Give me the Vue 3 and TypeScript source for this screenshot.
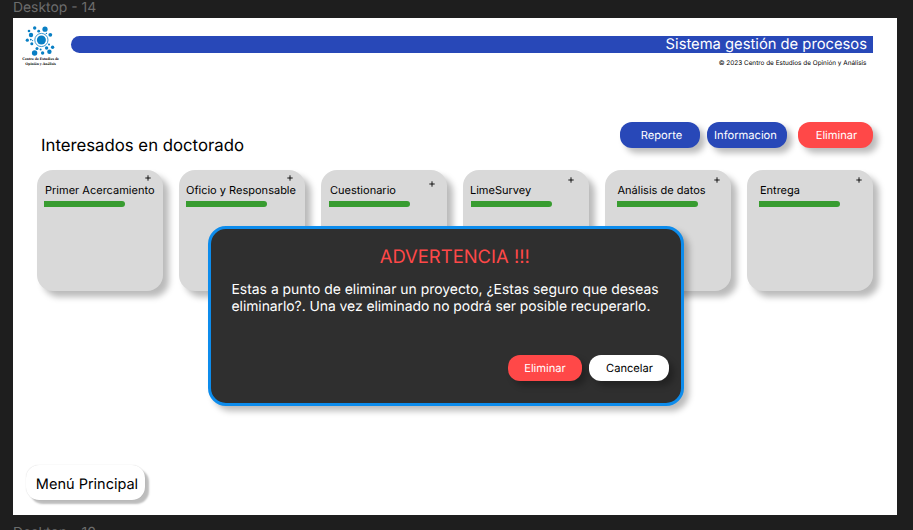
<script setup lang="ts">
interface Stage {
  id: string
  title: string
}

interface Dot {
  x: number
  y: number
  r: number
}

const stages: Stage[] = [
  { id: 'acercamiento', title: 'Primer Acercamiento' },
  { id: 'oficio', title: 'Oficio y Responsable' },
  { id: 'cuestionario', title: 'Cuestionario' },
  { id: 'limesurvey', title: 'LimeSurvey' },
  { id: 'analisis', title: 'Análisis de datos' },
  { id: 'entrega', title: 'Entrega' },
]

const dots: Dot[] = [
  { x: 13.7, y: 3, r: 1.7 },
  { x: 24, y: 4.2, r: 2.6 },
  { x: 8, y: 6, r: 1.3 },
  { x: 17.7, y: 6.2, r: 1.4 },
  { x: 10, y: 10, r: 2.2 },
  { x: 29.3, y: 9.8, r: 1.9 },
  { x: 6.3, y: 15.2, r: 1.6 },
  { x: 9.8, y: 14.6, r: 0.9 },
  { x: 11.6, y: 15.6, r: 0.6 },
  { x: 10.8, y: 18.8, r: 1.5 },
  { x: 28, y: 19.6, r: 1 },
  { x: 31.6, y: 22.2, r: 1.7 },
  { x: 16, y: 23.4, r: 1.5 },
  { x: 25.6, y: 23, r: 1.7 },
  { x: 19.6, y: 24.6, r: 1 },
  { x: 13.6, y: 28, r: 2.7 },
  { x: 21.6, y: 28, r: 1.7 },
  { x: 28.4, y: 26.8, r: 2.2 },
  { x: 25.4, y: 8.4, r: 0.7 },
]
</script>

<template>
  <div class="canvas">
    <div class="frame-label">Desktop - 14</div>
    <main class="frame">
      <header class="header">
        <div class="logo">
          <svg class="logo-mark" viewBox="0 0 36 31">
            <circle v-for="(d, i) in dots" :key="i" :cx="d.x" :cy="d.y" :r="d.r" />
            <circle cx="20.4" cy="15" r="4.5" />
            <circle class="ring" cx="20.4" cy="15" r="6.6" />
          </svg>
          <div class="logo-text">Centro de Estudios de<br />Opinión y Análisis</div>
        </div>
        <div class="heading">
          <div class="banner">Sistema gestión de procesos</div>
          <div class="copyright">© 2023 Centro de Estudios de Opinión y Análisis</div>
        </div>
      </header>

      <section class="toolbar">
        <h1 class="title">Interesados en doctorado</h1>
        <button class="btn report">Reporte</button>
        <button class="btn info">Informacion</button>
        <button class="btn remove">Eliminar</button>
      </section>

      <section class="stages">
        <article v-for="s in stages" :key="s.id" class="stage" :class="s.id">
          <svg class="plus" viewBox="0 0 6 6"><path d="M3 .3V5.7M.3 3H5.7" /></svg>
          <div class="stage-title">{{ s.title }}</div>
          <div class="progress"></div>
        </article>
      </section>

      <button class="menu">Menú Principal</button>

      <div class="dialog" role="alertdialog">
        <h2 class="dialog-title">ADVERTENCIA !!!</h2>
        <p class="dialog-text">
          Estas a punto de eliminar un proyecto, ¿Estas seguro que deseas<br />
          <span class="second">eliminarlo?. Una vez eliminado no podrá ser posible recuperarlo.</span>
        </p>
        <div class="dialog-actions">
          <button class="btn confirm">Eliminar</button>
          <button class="btn cancel">Cancelar</button>
        </div>
      </div>
    </main>
    <div class="frame-label next">Desktop - 10</div>
  </div>
</template>

<style>
body {
  background: #1e1e1e;
  overflow: hidden;
}
</style>

<style scoped>
.canvas {
  box-sizing: border-box;
  width: 913px;
  height: 530px;
  padding-left: 13px;
  overflow: hidden;
  background: #1e1e1e;
  font-family: Inter, "Liberation Sans", sans-serif;
  text-rendering: geometricPrecision;
  color: #000;
}
.frame-label {
  height: 18px;
  line-height: 16px;
  font-size: 13.9px;
  color: #6c6c6c;
  white-space: nowrap;
}
.frame-label.next {
  padding-top: 10px;
}
.frame {
  position: relative;
  box-sizing: border-box;
  width: 884px;
  height: 497px;
  padding: 7px 24px 0 8px;
  background: #fff;
}
button {
  border: 0;
  padding: 0;
  font-family: inherit;
  text-rendering: inherit;
  white-space: nowrap;
}
.header {
  display: flex;
  height: 97px;
}
.logo {
  width: 50px;
}
.logo-mark {
  display: block;
  width: 36px;
  height: 31px;
  fill: #087fc4;
}
.ring {
  fill: none;
  stroke: #087fc4;
  stroke-width: 0.8;
}
.logo-text {
  width: 39px;
  margin-top: 1px;
  font: bold 3.9px/4.6px "Liberation Serif", serif;
  text-align: center;
  white-space: nowrap;
}
.heading {
  flex: 1;
  padding-top: 10.5px;
}
.banner {
  box-sizing: border-box;
  height: 17.5px;
  padding-right: 6px;
  border-radius: 9px 0 0 9px;
  background: #2848b8;
  color: #fff;
  font-size: 14.75px;
  line-height: 17px;
  text-align: right;
}
.copyright {
  padding: 6px 6.5px 0 0;
  font-size: 6.42px;
  line-height: 8px;
  text-align: right;
}
.toolbar {
  display: flex;
  height: 48px;
  padding-left: 20px;
}
.title {
  flex: 1;
  margin: 14px 0 0;
  font-size: 16.75px;
  line-height: 20px;
  font-weight: 400;
  white-space: nowrap;
}
.btn {
  box-sizing: border-box;
  height: 26px;
  border-radius: 12px;
  color: #fff;
  font-size: 11.15px;
  line-height: 26px;
  box-shadow: 5px 5px 6px rgba(0, 0, 0, 0.27);
}
.report {
  width: 80px;
  padding-left: 3px;
  margin-right: 7px;
  background: #2848b8;
}
.info {
  width: 80px;
  padding-right: 3px;
  margin-right: 11px;
  background: #2848b8;
}
.remove {
  width: 75px;
  padding-left: 2px;
  background: #ff4848;
}
.stages {
  display: flex;
  gap: 16.3px;
  padding-left: 16px;
}
.stage {
  --inset: 7px;
  --label: 1px;
  --plus: 108px;
  box-sizing: border-box;
  flex: none;
  width: 125.7px;
  height: 121px;
  padding-left: var(--inset);
  border-radius: 16px;
  background: #d9d9d9;
  box-shadow: 6px 6px 6px rgba(0, 0, 0, 0.27);
}
.plus {
  display: block;
  width: 6px;
  height: 6px;
  margin: 5px 0 0 calc(var(--plus) - var(--inset));
  fill: none;
  stroke: #000;
  stroke-width: 0.9;
}
.stage-title {
  height: 14px;
  margin: 2px 0 0 var(--label);
  font-size: 11.03px;
  line-height: 14px;
  white-space: nowrap;
}
.progress {
  width: 81px;
  height: 6px;
  margin-top: 4px;
  border-radius: 0 3px 3px 0;
  background: #389c30;
}
.oficio { --label: 0px; }
.cuestionario { --inset: 8px; --plus: 108.5px; }
.cuestionario .plus { margin-top: 11px; }
.cuestionario .stage-title { margin-top: -4px; }
.limesurvey { --inset: 8px; --label: -1px; --plus: 105px; }
.limesurvey .plus,
.analisis .plus,
.entrega .plus { margin-top: 6.5px; }
.limesurvey .stage-title,
.analisis .stage-title,
.entrega .stage-title { margin-top: 0.5px; }
.analisis { --inset: 12px; --label: 0.5px; --plus: 109px; }
.entrega { --inset: 12px; --plus: 109px; }
.menu {
  position: absolute;
  left: 13px;
  bottom: 15px;
  width: 119px;
  height: 35px;
  padding: 4px 0 0 3px;
  border-radius: 13px;
  background: #fff;
  color: #000;
  font-size: 14.5px;
  box-shadow: 4px 4px 2px rgba(0, 0, 0, 0.26), 0 0 1px rgba(0, 0, 0, 0.2);
}
.dialog {
  position: absolute;
  left: 195px;
  top: 208px;
  box-sizing: border-box;
  width: 476px;
  height: 180px;
  padding: 18px 12px 0 20.5px;
  border: 3px solid #0d8cec;
  border-radius: 18px;
  background: #2f2f2f;
  color: #fff;
  box-shadow: 5px 5px 6px rgba(0, 0, 0, 0.27);
}
.dialog-title {
  margin: 0 0 15px;
  padding-left: 9px;
  height: 20px;
  font-size: 18.45px;
  line-height: 20px;
  font-weight: 400;
  text-align: center;
  color: #ff4848;
}
.dialog-text {
  margin: 0;
  height: 73px;
  font-size: 13.92px;
  line-height: 17px;
  white-space: nowrap;
}
.second {
  letter-spacing: -0.05px;
}
.dialog-actions {
  display: flex;
  justify-content: flex-end;
  gap: 7.5px;
}
.confirm {
  width: 74px;
  padding-left: 1px;
  background: #ff4848;
}
.cancel {
  width: 80px;
  padding-left: 1px;
  background: #fff;
  color: #000;
}
</style>
